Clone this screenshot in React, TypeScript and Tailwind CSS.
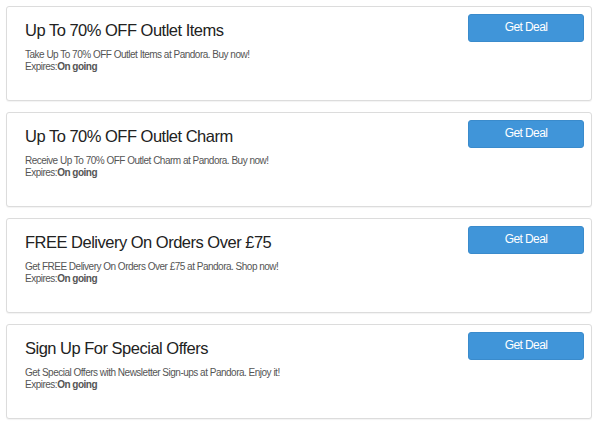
import React from 'react';

interface Deal {
  title: string;
  description: string;
}

const deals: Deal[] = [
  { title: 'Up To 70% OFF Outlet Items', description: 'Take Up To 70% OFF Outlet Items at Pandora. Buy now!' },
  { title: 'Up To 70% OFF Outlet Charm', description: 'Receive Up To 70% OFF Outlet Charm at Pandora. Buy now!' },
  { title: 'FREE Delivery On Orders Over £75', description: 'Get FREE Delivery On Orders Over £75 at Pandora. Shop now!' },
  { title: 'Sign Up For Special Offers', description: 'Get Special Offers with Newsletter Sign-ups at Pandora. Enjoy it!' },
];

const DealCard: React.FC<{ deal: Deal }> = ({ deal }) => (
  <div className="flex justify-between h-[95px] w-[586px] bg-white border border-[#dcdcdc] rounded-[3px] shadow-[0_1px_1px_rgba(0,0,0,0.05)]">
    <div className="pl-[18px] pt-[13px]">
      <h3 className="text-[16.5px] leading-[20px] tracking-[-0.5px] text-[#222]">{deal.title}</h3>
      <p className="mt-[9px] text-[10px] leading-[12px] tracking-[-0.5px] text-[#555]">{deal.description}</p>
      <p className="text-[10px] leading-[12px] tracking-[-0.5px] text-[#555]">
        Expires:<span className="font-bold">On going</span>
      </p>
    </div>
    <div className="pt-[7px] pr-[7px]">
      <button className="w-[116px] h-[28px] bg-[#4095d9] border border-[#3a8bcc] rounded-[3px] text-white text-[12px] leading-[14px] tracking-[-0.6px] pb-[2px]">
        Get Deal
      </button>
    </div>
  </div>
);

export default function App() {
  return (
    <div className="w-[600px] h-[426px] bg-white pt-[6px] pl-[6px] flex flex-col gap-[11px] font-['Liberation_Sans',Arial,sans-serif]">
      {deals.map((deal) => (
        <DealCard key={deal.title} deal={deal} />
      ))}
    </div>
  );
}
